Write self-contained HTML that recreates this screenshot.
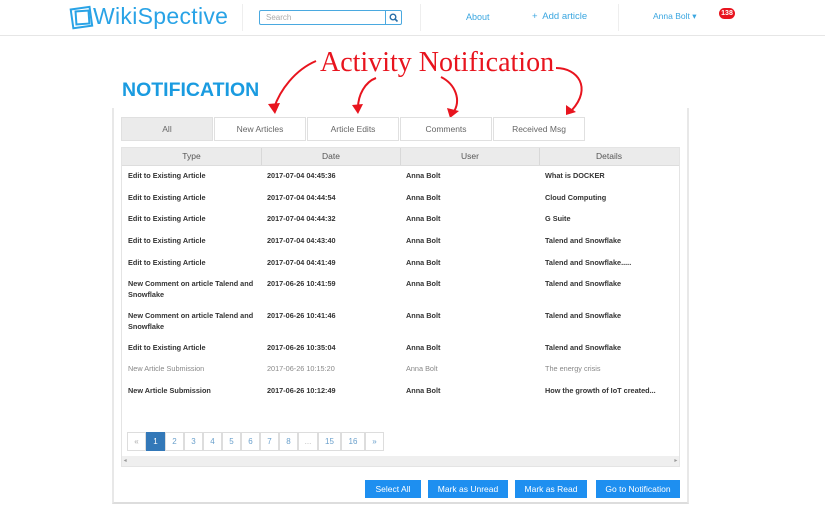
<!DOCTYPE html>
<html><head><meta charset="utf-8"><style>
*{box-sizing:border-box;margin:0;padding:0}
body{width:825px;height:525px;background:#fff;font-family:"Liberation Sans",sans-serif;position:relative;overflow:hidden}
.abs{position:absolute}
.hdr{left:0;top:0;width:825px;height:36px;border-bottom:1px solid #e6e6e6}
.vsep{width:1px;background:#eee;top:4px;height:27px}
.nav{color:#3aa6e0;font-size:9px}
.panel{left:112px;top:108px;width:577px;height:396px;border-left:2px solid #e8e8e8;border-right:2px solid #e8e8e8;border-bottom:2px solid #ddd}
.tab{top:117px;height:24px;border:1px solid #e0e0e0;background:#fff;color:#666;font-size:8.5px;text-align:center;line-height:22px}
.tbl{left:121px;top:147px;width:559px;height:320px;border:1px solid #e4e4e4}
.th{position:absolute;top:0;height:18px;background:#ebebeb;width:557px;left:0;border-bottom:1px solid #ddd}
.th div{position:absolute;top:0;height:17px;line-height:17px;text-align:center;font-size:8.5px;color:#555;width:139px}
.th div+div{border-left:1px solid #d8d8d8}
.r{position:absolute;font-size:7.3px;font-weight:bold;color:#333;line-height:10.5px}
.r.n{font-weight:normal;color:#888}
.pg{top:432px;height:19px;border:1px solid #ddd;font-size:8px;color:#6aa0cc;text-align:center;line-height:17px;background:#fff}
.btn{top:480px;height:18px;background:#1e8ff0;color:#fff;font-size:8.5px;text-align:center;line-height:18px}
</style></head><body>
<div class="abs hdr"></div>
<svg class="abs" style="left:69px;top:5px" width="26" height="26" viewBox="0 0 26 26">
<g fill="none" stroke="#29a3e6" stroke-width="2"><rect x="3" y="3" width="19" height="19" transform="rotate(-8 13 13)"/><rect x="7" y="6" width="13" height="13" transform="rotate(-4 13 13)"/></g></svg>
<div class="abs" style="left:93px;top:3px;font-size:23px;color:#29a3e6;letter-spacing:0.3px">WikiSpective</div>
<div class="abs vsep" style="left:242px"></div>
<div class="abs" style="left:259px;top:10px;width:143px;height:15px;border:1px solid #4aa9e0;border-radius:2px"></div>
<div class="abs" style="left:266px;top:13px;font-size:8px;color:#aaa">Search</div>
<div class="abs" style="left:385px;top:10px;width:17px;height:15px;border-left:1px solid #4aa9e0"></div>
<svg class="abs" style="left:389px;top:13px" width="10" height="10"><circle cx="4" cy="4" r="2.8" fill="none" stroke="#2a6fa8" stroke-width="1.4"/><line x1="6" y1="6" x2="8.5" y2="8.5" stroke="#2a6fa8" stroke-width="1.6"/></svg>
<div class="abs vsep" style="left:420px"></div>
<div class="abs nav" style="left:466px;top:12px">About</div>
<div class="abs nav" style="left:532px;top:11px;font-size:9.5px">+&nbsp; Add article</div>
<div class="abs vsep" style="left:618px"></div>
<div class="abs nav" style="left:653px;top:11px;font-size:8.5px">Anna Bolt ▾</div>
<div class="abs" style="left:719px;top:8px;width:16px;height:11px;border-radius:6px;background:#e8141e;color:#fff;font-size:7px;font-weight:bold;text-align:center;line-height:11px">138</div>

<div class="abs" style="left:122px;top:79px;font-size:19.5px;font-weight:bold;color:#1a9be0">NOTIFICATION</div>
<div class="abs" style="left:320px;top:47px;font-family:'Liberation Serif',serif;font-size:28px;color:#e8141e">Activity Notification</div>
<svg class="abs" style="left:0;top:0" width="825" height="130"><g fill="none" stroke="#e8141e" stroke-width="2">
<path d="M316 61 C295 70 280 90 274 108"/><path d="M376 78 C365 82 358 95 358 108"/><path d="M441 77 C455 84 462 100 453 113"/><path d="M556 68 C578 68 592 88 572 110"/></g>
<g fill="#e8141e"><path d="M268 104 L275 114 L280 103Z"/><path d="M352 105 L358 114 L363 104Z"/><path d="M447 108 L450 118 L459 111Z"/><path d="M566 105 L566 115 L576 112Z"/></g></svg>

<div class="abs panel"></div>
<div class="abs tab" style="left:121px;width:92px;background:#ebebeb">All</div>
<div class="abs tab" style="left:214px;width:92px">New Articles</div>
<div class="abs tab" style="left:307px;width:92px">Article Edits</div>
<div class="abs tab" style="left:400px;width:92px">Comments</div>
<div class="abs tab" style="left:493px;width:92px">Received Msg</div>

<div class="abs tbl">
<div class="th"><div style="left:0">Type</div><div style="left:139px">Date</div><div style="left:278px">User</div><div style="left:417px">Details</div></div>
<div class="abs" style="left:0;top:308px;width:557px;height:10px;background:#efefef;font-size:6px;color:#999;line-height:10px">&nbsp;◂<span style="float:right">▸&nbsp;</span></div>
</div>
<div class="r" style="left:128px;top:171px">Edit to Existing Article</div><div class="r" style="left:267px;top:171px">2017-07-04 04:45:36</div><div class="r" style="left:406px;top:171px">Anna Bolt</div><div class="r" style="left:545px;top:171px">What is DOCKER</div>
<div class="r" style="left:128px;top:193px">Edit to Existing Article</div><div class="r" style="left:267px;top:193px">2017-07-04 04:44:54</div><div class="r" style="left:406px;top:193px">Anna Bolt</div><div class="r" style="left:545px;top:193px">Cloud Computing</div>
<div class="r" style="left:128px;top:214px">Edit to Existing Article</div><div class="r" style="left:267px;top:214px">2017-07-04 04:44:32</div><div class="r" style="left:406px;top:214px">Anna Bolt</div><div class="r" style="left:545px;top:214px">G Suite</div>
<div class="r" style="left:128px;top:236px">Edit to Existing Article</div><div class="r" style="left:267px;top:236px">2017-07-04 04:43:40</div><div class="r" style="left:406px;top:236px">Anna Bolt</div><div class="r" style="left:545px;top:236px">Talend and Snowflake</div>
<div class="r" style="left:128px;top:258px">Edit to Existing Article</div><div class="r" style="left:267px;top:258px">2017-07-04 04:41:49</div><div class="r" style="left:406px;top:258px">Anna Bolt</div><div class="r" style="left:545px;top:258px">Talend and Snowflake.....</div>
<div class="r" style="left:128px;top:279px;width:132px">New Comment on article Talend and Snowflake</div><div class="r" style="left:267px;top:279px">2017-06-26 10:41:59</div><div class="r" style="left:406px;top:279px">Anna Bolt</div><div class="r" style="left:545px;top:279px">Talend and Snowflake</div>
<div class="r" style="left:128px;top:311px;width:132px">New Comment on article Talend and Snowflake</div><div class="r" style="left:267px;top:311px">2017-06-26 10:41:46</div><div class="r" style="left:406px;top:311px">Anna Bolt</div><div class="r" style="left:545px;top:311px">Talend and Snowflake</div>
<div class="r" style="left:128px;top:343px">Edit to Existing Article</div><div class="r" style="left:267px;top:343px">2017-06-26 10:35:04</div><div class="r" style="left:406px;top:343px">Anna Bolt</div><div class="r" style="left:545px;top:343px">Talend and Snowflake</div>
<div class="r n" style="left:128px;top:364px">New Article Submission</div><div class="r n" style="left:267px;top:364px">2017-06-26 10:15:20</div><div class="r n" style="left:406px;top:364px">Anna Bolt</div><div class="r n" style="left:545px;top:364px">The energy crisis</div>
<div class="r" style="left:128px;top:386px">New Article Submission</div><div class="r" style="left:267px;top:386px">2017-06-26 10:12:49</div><div class="r" style="left:406px;top:386px">Anna Bolt</div><div class="r" style="left:545px;top:386px">How the growth of IoT created...</div>

<div class="abs pg" style="left:127px;width:19px;color:#aaa">«</div>
<div class="abs pg" style="left:146px;width:19px;background:#3378b8;color:#fff;border-color:#3378b8">1</div>
<div class="abs pg" style="left:165px;width:19px">2</div>
<div class="abs pg" style="left:184px;width:19px">3</div>
<div class="abs pg" style="left:203px;width:19px">4</div>
<div class="abs pg" style="left:222px;width:19px">5</div>
<div class="abs pg" style="left:241px;width:19px">6</div>
<div class="abs pg" style="left:260px;width:19px">7</div>
<div class="abs pg" style="left:279px;width:19px">8</div>
<div class="abs pg" style="left:298px;width:20px;color:#bbb">...</div>
<div class="abs pg" style="left:318px;width:23px">15</div>
<div class="abs pg" style="left:341px;width:24px">16</div>
<div class="abs pg" style="left:365px;width:19px">»</div>

<div class="abs btn" style="left:365px;width:56px">Select All</div>
<div class="abs btn" style="left:428px;width:80px">Mark as Unread</div>
<div class="abs btn" style="left:515px;width:72px">Mark as Read</div>
<div class="abs btn" style="left:596px;width:84px">Go to Notification</div>
</body></html>
